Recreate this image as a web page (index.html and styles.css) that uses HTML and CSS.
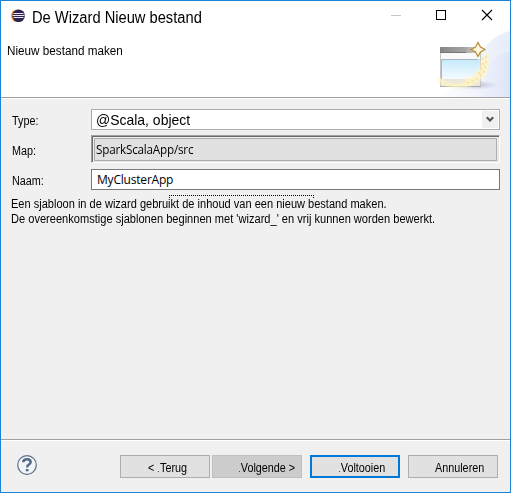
FILE: index.html
```html
<!DOCTYPE html>
<html lang="nl">
<head>
<meta charset="utf-8">
<title>De Wizard Nieuw bestand</title>
<link rel="stylesheet" href="styles.css">
</head>
<body>
<div class="window">
  <header class="header">
    <div class="titlebar">
      <svg class="logo" width="14" height="14" viewBox="0 0 14 14">
        <circle cx="6.3" cy="6.8" r="6.3" fill="#f7941e"/>
        <circle cx="7.600" cy="6.8" r="6.3" fill="#2c2255"/>
        <path d="M2.5 4.500h10M1.500 6.500h12M2.500 8.500h10" stroke="#e8e6f2" stroke-width="1"/>
      </svg>
      <h1 class="title">De Wizard Nieuw bestand</h1>
      <svg class="controls" width="104" height="12" viewBox="0 0 104 12">
        <path d="M0 6.5h10" stroke="#c8c8c8"/>
        <rect x="45.5" y="1.5" width="9" height="9" fill="none" stroke="#000"/>
        <path d="M91 1l10 10M101 1l-10 10" stroke="#000" stroke-width="1.1"/>
      </svg>
    </div>
    <p class="subtitle">Nieuw bestand maken</p>
    <svg class="banner" width="75" height="76" viewBox="435 21 75 76">
      <defs>
        <linearGradient id="sky" x1="0" x2="1"><stop offset="0" stop-color="#fff" stop-opacity="0"/><stop offset="1" stop-color="#dae2f6"/></linearGradient>
        <linearGradient id="fade" x1="0" x2="1"><stop offset="0" stop-color="#fff"/><stop offset="1" stop-color="#e0e8f8"/></linearGradient>
        <linearGradient id="bar" x1="0" x2="1"><stop offset="0" stop-color="#858585"/><stop offset=".6" stop-color="#a5a5a5"/><stop offset="1" stop-color="#e0ddd5"/></linearGradient>
        <linearGradient id="pane" x1="0" y1="0" x2="0" y2="1"><stop offset="0" stop-color="#c5e9fc"/><stop offset="1" stop-color="#f4fbff"/></linearGradient>
        <radialGradient id="shadow"><stop offset="0" stop-color="#aaa6bd"/><stop offset="1" stop-color="#c8cae0" stop-opacity="0"/></radialGradient>
        <filter id="soft" x="-30%" y="-30%" width="160%" height="160%"><feGaussianBlur stdDeviation="1.2"/></filter>
      </defs>
      <path d="M510 31Q497 34 488 44L470 64Q462 88 435 97H510Z" fill="url(#fade)" opacity=".8"/>
      <path d="M510 52Q492 54 484 76Q475 91 450 97H510Z" fill="url(#sky)" opacity=".8"/>
      <ellipse cx="475" cy="85" rx="25" ry="5" fill="url(#shadow)" opacity=".8"/>
      <rect x="440.500" y="47.500" width="40" height="39" fill="#fafafa" stroke="#c5c5c5"/>
      <rect x="440" y="47" width="41" height="6" fill="url(#bar)"/>
      <path d="M440 52.500h26" stroke="#777"/>
      <rect x="441" y="59" width="39" height="20" fill="url(#pane)"/>
      <path d="M441 59.500h37M441.500 59v20" stroke="#aab5bd"/>
      <rect x="441" y="79" width="39" height="7" fill="#ebe6dc"/>
      <path d="M440 86.500h41" stroke="#aaa"/>
      <path d="M486 53Q490 79 466 85Q448 88 438 79" fill="none" stroke="#fff6c4" stroke-width="4" opacity=".8" filter="url(#soft)"/>
      <path d="M484 60Q484 72 476 77Q470 82 464 83" fill="none" stroke="#fff3c4" stroke-width="6" opacity=".8" filter="url(#soft)"/>
      <g fill="none" stroke="#f8e09a" stroke-width="1.800" stroke-dasharray="2 3"><path d="M486 56Q488 70 478 78Q473 82 466 83"/><path d="M483 58Q484 69 476 76"/></g>
      <path d="M478 42.500L480.500 47L485 49.500L480.500 52L478 56.500L475.500 52L471 49.500L475.500 47Z" fill="#fff7df" stroke="#b88a32" stroke-width="1.200"/>
    </svg>
  </header>
  <main class="form">
    <div class="row type-row"><label class="type-label">Type:</label>
      <div class="select"><span class="type-value">@Scala, object</span><span class="arrow"><svg width="8" height="7" viewBox="0 0 8 7"><path d="M.8 1.200L4 4.500L7.200 1.200" fill="none" stroke="#505050" stroke-width="2"/></svg></span></div>
    </div>
    <div class="row map-row"><label class="map-label">Map:</label>
      <div class="sunken"><div class="readonly"><span class="map-value">SparkScalaApp/src</span></div></div>
    </div>
    <div class="row name-row"><label class="name-label">Naam:</label>
      <div class="input"><span class="name-value">MyClusterApp</span></div>
    </div>
    <div class="dots"></div>
    <p class="note note-one">Een sjabloon in de wizard gebruikt de inhoud van een nieuw bestand maken.</p>
    <p class="note note-two">De overeenkomstige sjablonen beginnen met 'wizard_' en vrij kunnen worden bewerkt.</p>
  </main>
  <footer class="footer">
    <svg class="help" width="20" height="20" viewBox="0 0 20 20">
      <circle cx="10" cy="10" r="9.300" fill="#f3f4f7" stroke="#5b6f8d" stroke-width="1.200"/>
      <path d="M6.300 7.300Q6.400 4.300 10 4.300Q13.600 4.300 13.600 7.200Q13.600 8.800 11.500 9.800Q10.200 10.600 10.200 12.500" fill="none" stroke="#566b8b" stroke-width="2.500"/>
      <rect x="8.800" y="14" width="2.700" height="2.300" fill="#566b8b"/>
    </svg>
    <div class="button back"><span>&lt; <i class="tick"></i>Terug</span></div>
    <div class="button next"><span><i class="tick"></i>Volgende &gt;</span></div>
    <div class="button finish"><span><i class="tick"></i>Voltooien</span></div>
    <div class="button cancel"><span>Annuleren</span></div>
  </footer>
</div>
</body>
</html>
```
FILE: styles.css
```css
* { box-sizing: border-box; }
body { margin: 0; font-family: "Liberation Sans", Arial, sans-serif; font-size: 12px; color: #000; }
h1, p { margin: 0; font-weight: normal; white-space: nowrap; }
.window { width: 511px; height: 493px; border: 1px solid #1883d7; background: #f0f0f0; display: flex; flex-direction: column; overflow: hidden; }
.header { position: relative; height: 98px; background: #fff; border-bottom: 1px solid #fff; box-shadow: inset 0 -1px #a0a0a0; flex: none; }
.titlebar { display: flex; height: 32px; padding-left: 10px; align-items: flex-start; position: relative; z-index: 1; }
.title, .subtitle, .note, label, .type-value, .map-value, .button span { transform-origin: 0 50%; }
.logo { margin-top: 8px; }
.title { margin-left: 7px; margin-top: 7px; width: 359px; font-size: 16px; line-height: 19px; transform: scaleX(.918); }
.controls { margin-top: 8px; }
.subtitle { margin: 11px 0 0 6px; line-height: 14px; transform: scaleX(.975); }
.banner { position: absolute; right: 0; bottom: 1px; }
.form { height: 340px; padding: 10px 10px 0; flex: none; }
.row { display: flex; align-items: center; }
label { width: 79px; margin-left: 1px; flex: none; transform: scaleX(.9); padding-top: 2px; }
.type-row { height: 21px; }
.map-row { height: 28px; margin-top: 5px; }
.map-label { padding-top: 4px; }
.name-label { padding-top: 3px; }
.name-row { height: 21px; margin-top: 6px; }
.select, .input { width: 409px; height: 21px; background: #fff; border: 1px solid #abadb3; display: flex; align-items: center; justify-content: space-between; white-space: nowrap; }
.select { padding: 1px 1px 1px 4px; font-size: 14.5px; }
.type-value { transform: scaleX(.963); }
.arrow { width: 16px; height: 17px; background: #f0f0f0; display: flex; align-items: center; justify-content: center; }
.input { border-color: #7a7a7a; padding-left: 5px; font-family: "Open Sans", sans-serif; }
.sunken { width: 409px; height: 28px; border: 1px solid; border-color: #a0a0a0 #fff #fff #a0a0a0; box-shadow: inset 1px 1px #696969, inset -1px -1px #e3e3e3; padding: 2px; }
.readonly { width: 403px; height: 23px; background: #e1e1e1; border: 1px solid #adadad; padding-left: 1px; display: flex; align-items: center; font-family: "Open Sans", sans-serif; }
.map-value { letter-spacing: -0.22px; transform: scaleX(.975); }
.name-value { letter-spacing: -0.2px; }
.dots { width: 145px; height: 3px; margin: 5px 0 0 158px; border: 1px dotted #000; border-bottom: 0; }
.note { line-height: 15px; }
.note-one { margin-top: -1px; transform: scaleX(.92); }
.note-two { transform: scaleX(.923); }
.footer { border-top: 1px solid #a0a0a0; box-shadow: inset 0 1px #fff; height: 53px; padding: 15px 11px 0 16px; display: flex; flex: none; }
.help { margin-right: 83px; }
.button { width: 90px; height: 23px; border: 1px solid #adadad; background: #e1e1e1; display: flex; align-items: center; white-space: nowrap; padding-top: 2px; }
.button span { transform: scaleX(.9); }
.tick { display: inline-block; width: 1px; height: 1px; margin-right: 1px; background: #333; }
.back { padding-left: 27px; }
.back .tick { margin-left: 1px; }
.next { margin-left: 2px; padding-left: 26px; background: #ccc; border-color: #bfbfbf; }
.finish { margin-left: 8px; padding-left: 27px; border: 2px solid #0078d7; }
.cancel { margin-left: 8px; padding-left: 26px; }
```
